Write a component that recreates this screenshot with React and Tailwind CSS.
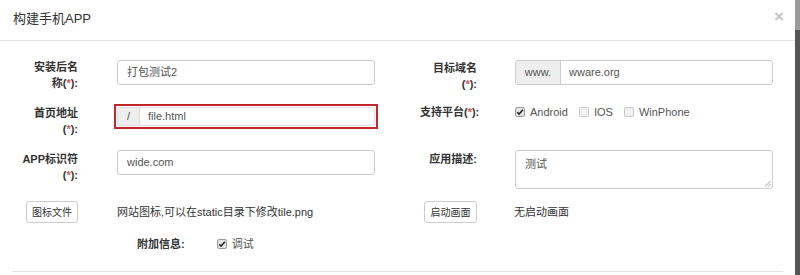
import React from "react"

const Req = () => (
  <span>
    (<span className="text-[#d9534f]">*</span>):
  </span>
)

const Check = ({ checked }) => (
  <span
    className={
      checked
        ? "w-[10px] h-[10px] border border-[#9a9a9a] bg-[#e4e4e4] rounded-[2px] flex items-center justify-center"
        : "w-[10px] h-[10px] border border-[#c8c8c8] bg-[#f3f3f3] rounded-[2px] flex items-center justify-center"
    }
  >
    {checked && (
      <svg width="8" height="8" viewBox="0 0 8 8">
        <path d="M1.2 4.2 L3.1 6.1 L6.9 1.8" fill="none" stroke="#222" strokeWidth="1.6" />
      </svg>
    )}
  </span>
)

const Option = ({ checked, label }) => (
  <div className="flex items-center gap-[5px]">
    <Check checked={checked} />
    <span>{label}</span>
  </div>
)

const Label = ({ children }) => (
  <div className="w-[58px] text-right font-bold text-[11px] leading-[16px] text-[#333]">{children}</div>
)

const RLabel = ({ children }) => (
  <div className="ml-[20px] w-[57px] text-right font-bold text-[11px] leading-[16px] text-[#333] whitespace-nowrap">
    {children}
  </div>
)

export default function App() {
  return (
    <div className="w-[800px] h-[275px] flex bg-white overflow-hidden font-['Liberation_Sans','Noto_Sans_CJK_SC',sans-serif]">
      <div className="w-[795px] flex flex-col">
        <div className="h-[41px] border-b border-[#e5e5e5] flex items-center justify-between pl-[13px] pr-[11px]">
          <span className="text-[13px] text-[#333] leading-none mt-[-4px]">构建手机APP</span>
          <span className="text-[17px] font-bold text-[#c4c4c4] leading-none mt-[-8px]">×</span>
        </div>

        <div className="pt-[19px] text-[11px] text-[#555]">
          {/* row 1 */}
          <div className="grid grid-cols-[400px_395px] h-[44px]">
            <div className="flex items-start">
              <div className="ml-[20px] mt-[-1px]">
                <Label>
                  安装后名
                  <br />称<Req />
                </Label>
              </div>
              <div className="ml-[39px] w-[258px] h-[25px] border border-[#ccc] rounded-[3px] flex items-center pl-[9px]">
                打包测试2
              </div>
            </div>
            <div className="flex items-start">
              <RLabel>
                目标域名
                <br />
                <Req />
              </RLabel>
              <div className="ml-[38px] w-[258px] h-[25px] border border-[#ccc] rounded-[3px] flex overflow-hidden">
                <div className="w-[45px] bg-[#eee] border-r border-[#ccc] flex items-center justify-center">www.</div>
                <div className="flex items-center pl-[8px]">wware.org</div>
              </div>
            </div>
          </div>

          {/* row 2 */}
          <div className="grid grid-cols-[400px_395px] h-[46px]">
            <div className="flex items-start">
              <div className="ml-[20px] mt-[1px]">
                <Label>
                  首页地址
                  <br />
                  <Req />
                </Label>
              </div>
              <div className="ml-[36px] w-[264px] h-[25px] border-2 border-[#c0272d] p-px">
                <div className="h-full border border-[#ddd] rounded-[2px] flex overflow-hidden">
                  <div className="w-[22px] bg-[#eee] border-r border-[#ddd] flex items-center justify-center">/</div>
                  <div className="flex items-center pl-[8px]">file.html</div>
                </div>
              </div>
            </div>
            <div className="flex items-start">
              <RLabel>
                支持平台
                <Req />
              </RLabel>
              <div className="ml-[38px] h-[16px] flex items-center gap-[11px] text-[#555]">
                <Option checked label="Android" />
                <Option label="IOS" />
                <Option label="WinPhone" />
              </div>
            </div>
          </div>

          {/* row 3 */}
          <div className="grid grid-cols-[400px_395px] h-[51px]">
            <div className="flex items-start">
              <div className="ml-[20px] mt-[1px]">
                <Label>
                  APP标识符
                  <br />
                  <Req />
                </Label>
              </div>
              <div className="ml-[39px] w-[258px] h-[25px] border border-[#ccc] rounded-[3px] flex items-center pl-[9px]">
                wide.com
              </div>
            </div>
            <div className="flex items-start">
              <div className="mt-[1px]">
                <RLabel>应用描述:</RLabel>
              </div>
              <div className="relative ml-[38px] w-[258px] h-[39px] border border-[#ccc] rounded-[3px] pl-[9px] pt-[5px] leading-[16px]">
                测试
                <svg className="absolute right-[1px] bottom-[1px]" width="7" height="7" viewBox="0 0 7 7">
                  <path d="M6.5 1 L1 6.5 M6.5 4 L4 6.5" stroke="#999" strokeWidth="1" />
                </svg>
              </div>
            </div>
          </div>

          {/* row 4 */}
          <div className="grid grid-cols-[400px_395px] h-[22px] text-[#333]">
            <div className="flex items-center">
              <button className="ml-[26px] w-[52px] h-[22px] border border-[#ccc] rounded-[3px] bg-white text-[10px] text-[#333]">
                图标文件
              </button>
              <span className="ml-[39px]">网站图标,可以在static目录下修改tile.png</span>
            </div>
            <div className="flex items-center">
              <button className="ml-[24px] w-[53px] h-[22px] border border-[#ccc] rounded-[3px] bg-white text-[10px] text-[#333]">
                启动画面
              </button>
              <span className="ml-[37px] text-[11px]">无启动画面</span>
            </div>
          </div>

          {/* row 5 */}
          <div className="mt-[13px] h-[16px] flex items-center">
            <span className="ml-[137px] font-bold text-[#333]">附加信息:</span>
            <div className="ml-[32px] text-[#555]">
              <Option checked label="调试" />
            </div>
          </div>

          <div className="mx-[12px] mt-[19px] border-t border-[#e5e5e5]"></div>
        </div>
      </div>
      <div className="flex-1 flex flex-col">
        <div className="h-[30px] bg-[#9a9a9a]"></div>
        <div className="flex-1 bg-[#555]"></div>
      </div>
    </div>
  )
}
